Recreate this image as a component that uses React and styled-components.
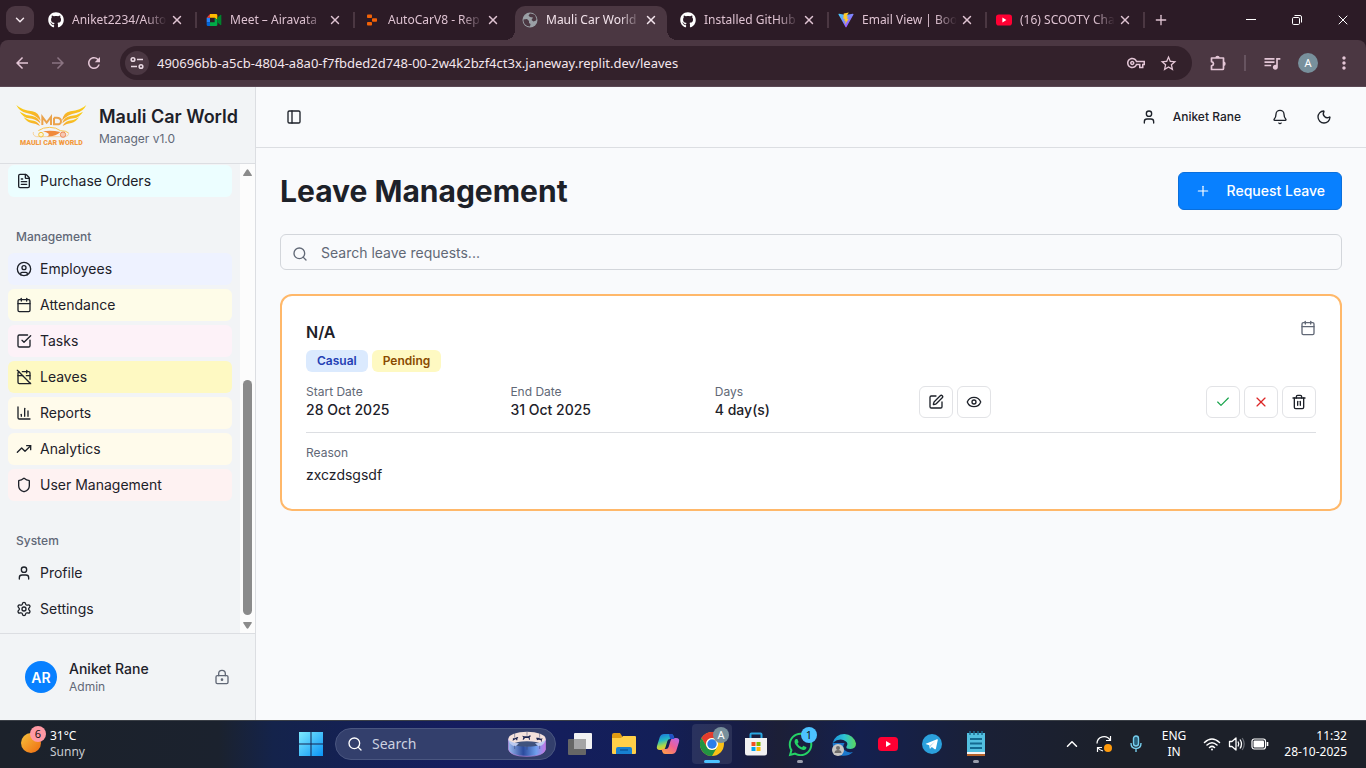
import React from 'react';
import styled, { createGlobalStyle, css } from 'styled-components';
import {
  ChevronDown, ChevronUp, X, Plus, FileText, CircleUser, Calendar,
  SquareCheckBig, CalendarOff, ChartColumn, TrendingUp, Shield, User, Settings, LockKeyhole,
  PanelLeft, Bell, Moon, Search, SquarePen, Eye, Check, Trash2,
} from 'lucide-react';
import { FaGithub, FaWhatsapp } from 'react-icons/fa';
import {
  MdArrowBack, MdArrowForward, MdRefresh, MdOutlineVpnKey, MdStarOutline, MdQueueMusic, MdMoreVert,
} from 'react-icons/md';

const SYSTEM_FONT = '"Noto Sans", "Open Sans", sans-serif';
const APP_FONT = 'Inter, "Liberation Sans", sans-serif';

const GlobalStyle = createGlobalStyle`
  *, *::before, *::after { box-sizing: border-box; }
  body { margin: 0; }
  h1, h2, p { margin: 0; }
  button, input { font: inherit; color: inherit; }
  button { margin: 0; padding: 0; border: 0; background: none; cursor: pointer; }
  input { min-width: 0; padding: 0; border: 0; outline: 0; background: none; }
  a { color: inherit; text-decoration: none; }
  svg { flex: none; display: block; }
`;

const Screen = styled.div`
  display: flex;
  flex-direction: column;
  height: 100vh;
  overflow: hidden;
  font-family: ${APP_FONT};
  color: #1d2129;
`;

/* ---------- browser window ---------- */

const TabStrip = styled.div`
  display: flex;
  align-items: stretch;
  height: 40px;
  flex: none;
  background: #2c1b26;
  color: #dfc3d2;
  font: 12px/16px ${SYSTEM_FONT};
`;

const TabSearch = styled.button`
  display: grid;
  place-items: center;
  width: 28px;
  height: 28px;
  margin: 6px 4px 6px 6px;
  border-radius: 9px;
  background: #4b3742;
  color: #f3e6ed;
`;

const Tab = styled.div`
  position: relative;
  display: flex;
  align-items: center;
  width: 158px;
  padding: 0 11px 0 10px;
  ${(p) => p.$active && css`
    color: #f3e4ec;
    &::before {
      content: '';
      position: absolute;
      inset: 6px 3px 0;
      border-radius: 10px 10px 0 0;
      background: #4b3742;
    }
    &::after {
      content: '';
      position: absolute;
      inset: auto -7px 0;
      height: 10px;
      background:
        radial-gradient(circle at 0 0, transparent 10px, #4b3742 10px) left / 10px 10px no-repeat,
        radial-gradient(circle at 100% 0, transparent 10px, #4b3742 10px) right / 10px 10px no-repeat;
    }
    > * { position: relative; }
  `}
  ${(p) => p.$divider && css`
    &::after {
      content: '';
      position: absolute;
      right: -1px;
      top: 12px;
      width: 2px;
      height: 16px;
      background: #4b3742;
    }
  `}
`;

const TabTitle = styled.span`
  flex: 1;
  min-width: 0;
  padding-left: 8px;
  white-space: nowrap;
  mask-image: linear-gradient(90deg, #000 78%, transparent 98%);
`;

const IconButton = styled.button`
  display: grid;
  place-items: center;
  flex: none;
  width: ${(p) => p.$w || 16}px;
  height: ${(p) => p.$h || 16}px;
`;

const NewTab = styled(IconButton)`
  align-self: center;
  margin-left: 3px;
`;

const WindowControls = styled.div`
  display: flex;
  margin-left: auto;
  color: #fff;
`;

const ToolbarWrap = styled.div`
  flex: none;
  background: #2c1b26;
`;

const Toolbar = styled.div`
  display: flex;
  align-items: center;
  height: 47px;
  padding: 0 4px;
  border-bottom: 1px solid #5b4854;
  border-radius: 8px 8px 0 0;
  background: #4b3742;
  color: #e4c6d6;
`;

const AddressBar = styled.div`
  display: flex;
  align-items: center;
  flex: 1;
  height: 34px;
  margin: 0 8px;
  padding: 0 8px 0 5px;
  border-radius: 17px;
  background: #33212b;
`;

const SiteInfo = styled(IconButton)`
  border-radius: 50%;
  background: #4b3742;
  margin-right: 8px;
`;

const AddressInput = styled.input`
  flex: 1;
  height: 24px;
  font: 13px/24px ${SYSTEM_FONT};
  color: #f3e6ed;
`;

const ToolbarDivider = styled.span`
  width: 2px;
  height: 16px;
  margin: 0 8px;
  background: #675460;
`;

const BrowserAvatar = styled.span`
  display: grid;
  place-items: center;
  width: 20px;
  height: 20px;
  border-radius: 50%;
  background: #78909c;
  color: #fff;
  font: 11px/20px ${SYSTEM_FONT};
`;

/* ---------- web page ---------- */

const Page = styled.div`
  display: flex;
  flex: 1;
  min-height: 0;
  background: #f9fafc;
`;

const Sidebar = styled.aside`
  display: flex;
  flex-direction: column;
  flex: none;
  width: 256px;
  border-right: 1px solid #dcdee2;
  background: #f2f4f6;
`;

const Brand = styled.header`
  display: flex;
  align-items: center;
  gap: 12px;
  flex: none;
  padding: 16px;
  border-bottom: 1px solid #dcdee2;
`;

const BrandName = styled.p`
  font-size: 18px;
  line-height: 28px;
  font-weight: 600;
  white-space: nowrap;
`;

const Muted = styled.p`
  font-size: 12px;
  line-height: 16px;
  color: #616876;
`;

const NavArea = styled.div`
  display: flex;
  flex: 1;
  min-height: 0;
`;

const NavList = styled.nav`
  display: flex;
  flex-direction: column;
  justify-content: flex-end;
  gap: 8px;
  flex: 1;
  overflow: hidden;
`;

const NavGroup = styled.div`
  display: flex;
  flex-direction: column;
  gap: 4px;
  padding: 8px;
`;

const NavLabel = styled.h2`
  height: 28px;
  padding: 0 8px;
  font-size: 12px;
  line-height: 32px;
  font-weight: 500;
  color: #616876;
`;

const NavItem = styled.a`
  display: flex;
  align-items: center;
  gap: 8px;
  height: 32px;
  padding: 0 8px;
  border-radius: 6px;
  background: ${(p) => p.$tint || 'transparent'};
  font-size: 14px;
  line-height: 20px;
`;

const ScrollTrack = styled.div`
  display: flex;
  flex-direction: column;
  align-items: center;
  flex: none;
  width: 15px;
  padding: 5px 0 4px;
  background: #fcfcfc;
`;

const ScrollThumb = styled.div`
  width: 9px;
  height: 51%;
  margin: auto 0 7px;
  border-radius: 5px;
  background: #8b8b8b;
`;

const SidebarFooter = styled.footer`
  flex: none;
  padding: 16px;
  border-top: 1px solid #dcdee2;
`;

const AccountButton = styled.button`
  display: flex;
  align-items: center;
  gap: 12px;
  width: 100%;
  padding: 9px;
  text-align: left;
  color: #616876;
`;

const AccountText = styled.span`
  display: flex;
  flex-direction: column;
  flex: 1;
`;

const AccountName = styled.span`
  font-size: 14px;
  line-height: 20px;
  font-weight: 500;
  color: #1d2129;
`;

const Avatar = styled.span`
  display: grid;
  place-items: center;
  width: 32px;
  height: 32px;
  border-radius: 50%;
  background: #0880ff;
  color: #fff;
  font-size: 14px;
  font-weight: 600;
`;

const Main = styled.div`
  display: flex;
  flex-direction: column;
  flex: 1;
  min-width: 0;
`;

const TopBar = styled.header`
  display: flex;
  align-items: center;
  gap: 8px;
  height: 61px;
  padding: 0 24px;
  border-bottom: 1px solid #dcdee2;
`;

const UserButton = styled.button`
  display: flex;
  align-items: center;
  gap: 16px;
  height: 32px;
  margin-left: auto;
  padding: 0 13px;
  font-size: 12px;
  line-height: 16px;
  font-weight: 500;
`;

const Content = styled.main`
  display: flex;
  flex-direction: column;
  gap: 24px;
  padding: 24px;
`;

const TitleRow = styled.div`
  display: flex;
  align-items: center;
  justify-content: space-between;
`;

const Title = styled.h1`
  font-size: 30px;
  line-height: 36px;
  font-weight: 700;
`;

const PrimaryButton = styled.button`
  display: flex;
  align-items: center;
  gap: 16px;
  height: 38px;
  padding: 0 16px;
  border: 1px solid #0a6fdc;
  border-radius: 6px;
  background: #0880ff;
  color: #fff;
  font-size: 14px;
  line-height: 20px;
  font-weight: 500;
`;

const SearchBox = styled.label`
  display: flex;
  align-items: center;
  gap: 12px;
  height: 36px;
  padding: 0 11px;
  border: 1px solid #d3d6db;
  border-radius: 6px;
  color: #616876;
  svg { margin-top: 4px; }
  input { flex: 1; height: 20px; margin-top: 2px; padding-left: 1px; font-size: 14px; line-height: 20px; }
  input::placeholder { color: #616876; opacity: 1; }
`;

const Card = styled.article`
  padding: 24px;
  border: 2px solid #ffb86a;
  border-radius: 12px;
  background: #fff;
`;

const CardHeader = styled.div`
  display: flex;
  justify-content: space-between;
  margin-bottom: 12px;
  > svg { color: #616876; }
`;

const CardTitle = styled.h2`
  margin-bottom: 6px;
  font-size: 16px;
  line-height: 24px;
  font-weight: 600;
`;

const Badges = styled.div`
  display: flex;
  gap: 4px;
`;

const Badge = styled.span`
  padding: 3px 11px;
  border-radius: 6px;
  background: ${(p) => p.$bg};
  color: ${(p) => p.$fg};
  font-size: 12px;
  line-height: 16px;
  font-weight: 600;
`;

const Facts = styled.div`
  display: grid;
  grid-template-columns: repeat(5, minmax(0, 1fr));
  align-items: center;
  gap: 12px;
  padding-bottom: 12px;
  border-bottom: 1px solid #dcdee2;
`;

const FactValue = styled.p`
  font-size: 14px;
  line-height: 20px;
  font-weight: 500;
`;

const Actions = styled.div`
  display: flex;
  gap: 4px;
  justify-content: ${(p) => (p.$end ? 'flex-end' : 'flex-start')};
`;

const ActionButton = styled.button`
  display: grid;
  place-items: center;
  width: 34px;
  height: 32px;
  border: 1px solid #e2e3e6;
  border-radius: 6px;
  background: #fff;
  color: ${(p) => p.$color || '#1d2129'};
`;

const Reason = styled.div`
  display: flex;
  flex-direction: column;
  gap: 4px;
  padding-top: 12px;
`;

const ReasonText = styled.p`
  font-size: 14px;
  line-height: 20px;
`;

/* ---------- desktop taskbar ---------- */

const Taskbar = styled.footer`
  display: flex;
  align-items: center;
  flex: none;
  height: 48px;
  box-shadow: inset 0 1px #3b4047;
  background: linear-gradient(90deg, #1c222b 0, #1b222e 16%, #14234b 20%, #151d60 34%, #131f58 48%, #171d45 54%, #1c1f37 57%, #14204f 63%, #1a2036 72%, #1c2029 82%);
  color: #fff;
  font: 12px/16px ${SYSTEM_FONT};
`;

const Weather = styled.button`
  display: flex;
  align-items: center;
  gap: 3px;
  flex: none;
  width: 291px;
  padding-left: 19px;
  text-align: left;
`;

const WeatherText = styled.span`
  span { display: block; color: #c9ccd1; }
`;

const Apps = styled.div`
  display: flex;
  align-items: center;
  gap: 4px;
`;

const AppButton = styled.button`
  position: relative;
  display: grid;
  place-items: center;
  width: 40px;
  height: 40px;
  border-radius: 4px;
  background: ${(p) => (p.$active ? 'rgba(255,255,255,0.09)' : 'none')};
  &::after {
    content: '';
    display: ${(p) => (p.$running || p.$active ? 'block' : 'none')};
    position: absolute;
    bottom: 1px;
    left: calc(50% - ${(p) => (p.$active ? 8 : 3)}px);
    width: ${(p) => (p.$active ? 16 : 6)}px;
    height: 3px;
    border-radius: 2px;
    background: ${(p) => (p.$active ? '#4cc2ff' : '#9a9eac')};
  }
`;

const AppBadge = styled.span`
  position: absolute;
  top: 3px;
  right: 3px;
  display: grid;
  place-items: center;
  width: 16px;
  height: 16px;
  border-radius: 50%;
  background: ${(p) => p.$bg};
  color: ${(p) => p.$fg};
  font: 11px/16px ${SYSTEM_FONT};
`;

const TaskSearch = styled.label`
  display: flex;
  align-items: center;
  gap: 9px;
  width: 221px;
  height: 32px;
  padding: 0 9px 0 11px;
  border: 1px solid #4a5680;
  border-radius: 16px;
  background: #333f6c;
  font-size: 14px;
  input { flex: 1; }
  input::placeholder { color: #cdd1e0; opacity: 1; }
`;

const Tray = styled.div`
  display: flex;
  align-items: center;
  margin-left: auto;
  padding-right: 19px;
`;

const TrayText = styled.button`
  width: ${(p) => p.$w}px;
  text-align: ${(p) => p.$align || 'center'};
  span { display: block; }
`;

/* ---------- drawings ---------- */

const MeetIcon = () => (
  <svg width="16" height="16" viewBox="0 0 48 48">
    <path fill="#2684fc" d="M2 17h10v14H2z" />
    <path fill="#0066da" d="M2 31h10v11H6a4 4 0 0 1-4-4z" />
    <path fill="#ea4335" d="M12 6 2 17h10z" />
    <path fill="#ffba00" d="M12 6h18a4 4 0 0 1 4 4v14l-8-7H12z" />
    <path fill="#00ac47" d="M12 31h14V17l8 7v14a4 4 0 0 1-4 4H12z" />
    <path fill="#00832d" d="m34 17 9-8c1.600-1 3 0 3 1.500v27c0 1.500-1.400 2.500-3 1.500l-9-8z" />
  </svg>
);

const ReplitIcon = () => (
  <svg width="16" height="16" viewBox="0 0 16 16" fill="#f26207">
    <rect x="3" y="2.500" width="5" height="3.600" rx=".8" />
    <rect x="8" y="6.200" width="5" height="3.600" rx=".8" />
    <rect x="3" y="9.900" width="5" height="3.600" rx=".8" />
  </svg>
);

const GlobeIcon = () => (
  <svg width="16" height="16" viewBox="0 0 16 16">
    <circle cx="8" cy="8" r="7.500" fill="#9aa0a6" />
    <path fill="#4b3742" d="M1.500 7.500 5 7l2 2v2l1.500 1L8 14.500C4 14.500 1.200 11.500 1.500 7.500ZM8 1.500 6.500 3.500 8 5l3 .5L9.500 8l2 1.500 2.500-1 .5-1.500-1.500-4Q11 1.600 8 1.500Z" />
  </svg>
);

const ViteIcon = () => (
  <svg width="16" height="16" viewBox="0 0 32 32">
    <defs>
      <linearGradient id="viteBody" x1="0" y1="0" x2="1" y2="1">
        <stop stopColor="#41d1ff" />
        <stop offset="1" stopColor="#bd34fe" />
      </linearGradient>
    </defs>
    <path fill="url(#viteBody)" d="M31 5 17 30q-1 1.500-2 0L1 5q-.5-1.800 1.200-1.500L16 6l13.500-2.500Q31.500 3.500 31 5Z" />
    <path fill="#ffca28" d="m21.500 1-10 2-.8 11 3-.6-1 5 2.600-.8-1.300 7.400 7.500-11.500-3.500.6 1.700-5.500-3.200.6Z" />
  </svg>
);

const YouTubeIcon = ({ size }) => (
  <svg width={size} height={size} viewBox="0 0 20 20">
    <rect y="3" width="20" height="14" rx="3.500" fill="#ff0033" />
    <path d="m8 7 5 3-5 3z" fill="#fff" />
  </svg>
);

const SiteInfoIcon = () => (
  <svg width="16" height="16" viewBox="0 0 16 16" fill="none" stroke="#e9d8e2" strokeWidth="1.600">
    <circle cx="4" cy="4.500" r="1.800" />
    <path d="M8 4.500h6M2 11.500h6" />
    <circle cx="12" cy="11.500" r="1.800" />
  </svg>
);

const ExtensionsIcon = () => (
  <svg width="18" height="18" viewBox="0 0 18 18">
    <path
      d="M2.500 4h12v10.500q0 1-1 1h-11v-3.600q2-.4 2-2.100t-2-2.100Z"
      fill="none" stroke="currentColor" strokeWidth="1.700" strokeLinejoin="round"
    />
    <path d="M6.300 4a2.200 2.200 0 0 1 4.400 0zM14.500 7.500a2.200 2.200 0 0 1 0 4.400z" fill="currentColor" />
  </svg>
);

const MinimizeIcon = () => (
  <svg width="12" height="12" viewBox="0 0 12 12" stroke="#fff"><path d="M1 5.500h10" /></svg>
);

const RestoreIcon = () => (
  <svg width="12" height="12" viewBox="0 0 12 12" fill="none" stroke="#fff">
    <rect x="1.500" y="3.500" width="7" height="7" rx="1.200" />
    <path d="M3.500 1.500H9A1.500 1.500 0 0 1 10.500 3v5.500" />
  </svg>
);

const Wing = (props) => (
  <g {...props}>
    <path d="M50 57q17 16 48 19 20 3 25 28-18-19-42-23-22-4-31-24Z" />
    <path d="M60 77q17 11 38 13 20 4 24 22-15-13-34-15-18-3-28-20Z" />
    <path d="M72 94q14 9 30 10 14 4 19 16-12-8-26-9-14-3-23-17Z" />
  </g>
);

const BrandLogo = () => (
  <svg width="71" height="42" viewBox="49 54 213 126" role="img" aria-label="Mauli Car World logo">
    <defs>
      <linearGradient id="wing" x1="0" y1="0" x2="0" y2="1">
        <stop stopColor="#fbd50f" />
        <stop offset="1" stopColor="#f4a03a" />
      </linearGradient>
    </defs>
    <Wing fill="url(#wing)" />
    <Wing fill="url(#wing)" transform="translate(310 0) scale(-1 1)" />
    <g fill="none" stroke="#eba34c" strokeWidth="6">
      <path d="M128 117V93l13 17 13-17v24M163 95h8q13 0 13 10.500T171 115h-8V95" />
    </g>
    <path d="M116 134q14-10 34-10 20 0 32 10 18 0 25 7" fill="none" stroke="#fac54c" strokeWidth="3" />
    <path d="M130 136q24-5 52 2-10 12-40 15 16-10-12-17Z" fill="#f08a3c" />
    <path d="M101 138q-2 12 10 14h86q10-2 10-10" fill="none" stroke="#f6c177" strokeWidth="2" />
    <circle cx="124" cy="146" r="7" fill="#fff4cf" stroke="#f3c33c" strokeWidth="3" />
    <circle cx="190" cy="146" r="8" fill="#f6c9b4" stroke="#ec8a5c" strokeWidth="3" />
    <text x="155" y="178" textAnchor="middle" fill="#f39a3e" fontFamily="Roboto, sans-serif" fontWeight="900" fontSize="21">MAULI CAR WORLD</text>
  </svg>
);

const ScrollArrow = ({ down }) => (
  <svg width="9" height="7" viewBox="0 0 9 7" fill="#8b8b8b">
    <path d={down ? 'M1 0h7q1.500 0 .6 1.300L5.500 6q-1 1.400-2 0L.4 1.300Q-.5 0 1 0Z' : 'M1 7h7q1.500 0 .6-1.300L5.500 1q-1-1.400-2 0L.4 5.700Q-.5 7 1 7Z'} />
  </svg>
);

const WeatherIcon = () => (
  <svg width="28" height="36" viewBox="0 0 28 36">
    <defs>
      <linearGradient id="sun" x1="0" y1="0" x2="1" y2="1">
        <stop stopColor="#f7c33c" />
        <stop offset="1" stopColor="#ee6a10" />
      </linearGradient>
    </defs>
    <circle cx="12" cy="17" r="10" fill="url(#sun)" />
    <circle cx="19" cy="8" r="8" fill="#ff99a4" />
    <text x="19" y="12" textAnchor="middle" fontFamily="Noto Sans, sans-serif" fontSize="11" fill="#111">6</text>
  </svg>
);

const WindowsIcon = () => (
  <svg width="24" height="24" viewBox="0 0 24 24">
    <defs>
      <linearGradient id="win" gradientUnits="userSpaceOnUse" x1="0" y1="0" x2="24" y2="24">
        <stop stopColor="#7eeaff" />
        <stop offset="1" stopColor="#0a93f5" />
      </linearGradient>
    </defs>
    <path fill="url(#win)" d="M0 0h11.500v11.500H0zM12.500 0H24v11.500H12.500zM0 12.500h11.500V24H0zM12.500 12.500H24V24H12.500z" />
  </svg>
);

const CarouselIcon = () => (
  <svg width="38" height="26" viewBox="0 0 114 78">
    <defs>
      <linearGradient id="drum">
        <stop stopColor="#9dbbf0" />
        <stop offset=".4" stopColor="#2b4b9e" />
        <stop offset=".75" stopColor="#6fa0ee" />
        <stop offset="1" stopColor="#c477e6" />
      </linearGradient>
    </defs>
    <path d="M1 24v30q4 22 56 22t56-22V24z" fill="url(#drum)" stroke="#bb83dd" strokeWidth="2" />
    <ellipse cx="57" cy="24" rx="56" ry="22" fill="#f3e1dc" />
    <ellipse cx="57" cy="39" rx="38" ry="8" fill="#40537e" />
    <path d="M1 26q4 18 22 20l10-9q-22-2-32-11ZM113 26q-4 18-22 20l-10-9q22-2 32-11Z" fill="#bccaf0" />
    <g fill="#1b2350">
      <path d="M42 14l7 2h12l5-3 3 2-4 4 1 7h-3l-1-5H51l-4 5h-3l2-7zM14 22l6 0 8-4 3 1-3 4 0 5h-3l-1-4-6 3-4 3 1-7zM84 20l7 0 8 3 5-1-3 5 1 5-3-1-1-4-7-1-4 2-1-4z" />
    </g>
    <path d="M57 2v12M57 44v12M20 6v14M20 44v10M95 6v14M95 44v10" stroke="#34406c" strokeWidth="1.500" fill="none" />
  </svg>
);

const TaskViewIcon = () => (
  <svg width="24" height="24" viewBox="0 0 24 24">
    <rect x="6" y="1" width="18" height="16" rx="1" fill="#f1f1f3" />
    <rect x="0" y="7" width="18" height="16" rx="1" fill="#666" />
    <path d="M6 7h12v10H6z" fill="#a4a4a6" />
  </svg>
);

const FolderIcon = () => (
  <svg width="24" height="24" viewBox="0 0 24 24">
    <path d="M0 3q0-2 2-2h6l2 3v5H0z" fill="#e09a12" />
    <path d="M0 6h9l2-2h12q1 0 1 1v16q0 1-1 1H1q-1 0-1-1z" fill="#ffcf48" />
    <path d="M4 22v-5q0-2 2-2h12q2 0 2 2v5z" fill="#1780d0" />
    <path d="M8 18h8" stroke="#0b5aa0" strokeWidth="1.500" />
  </svg>
);

const CopilotIcon = () => (
  <svg width="24" height="24" viewBox="0 0 24 24">
    <defs>
      <linearGradient id="copA" x1="0" y1="0" x2=".3" y2="1">
        <stop stopColor="#1c6fe0" /><stop offset=".45" stopColor="#23b9c4" /><stop offset=".75" stopColor="#a8d64a" /><stop offset="1" stopColor="#f5c52c" />
      </linearGradient>
      <linearGradient id="copB" x1="1" y1="0" x2=".2" y2="1">
        <stop stopColor="#b56af0" /><stop offset=".5" stopColor="#ee5f95" /><stop offset="1" stopColor="#ff9a4a" />
      </linearGradient>
    </defs>
    <path d="M8 2h7q2 0 2.700 2.300L18.500 7H14q-2 0-2.600 2l-2 6.500Q8.800 18 6.500 18H4q-4 0-3-4L3.800 5Q5 2 8 2Z" fill="url(#copA)" />
    <path d="M16 22H9q-2 0-2.700-2.300L5.500 17H10q2 0 2.600-2l2-6.500Q15.200 6 17.500 6H20q4 0 3 4l-2.800 9q-1.200 3-4.200 3Z" fill="url(#copB)" />
    <path d="M13 2h2q2 0 2.700 2.300L18.500 7H14z" fill="#2151c4" />
  </svg>
);

const ChromeIcon = () => (
  <svg width="24" height="24" viewBox="0 0 24 24">
    <circle cx="12" cy="12" r="12" fill="#fbc116" />
    <path d="M1.600 6A12 12 0 0 1 22.400 6H12a6 6 0 0 0-5.200 9Z" fill="#e33b2e" />
    <path d="M1.600 6A12 12 0 0 0 12 24l5.200-9A6 6 0 0 1 6.800 15Z" fill="#229342" />
    <circle cx="12" cy="12" r="6" fill="#fff" />
    <circle cx="12" cy="12" r="4.700" fill="#2a7de9" />
  </svg>
);

const StoreIcon = () => (
  <svg width="24" height="24" viewBox="0 0 24 24">
    <path d="M6.500 7V2.500q0-1 1-1h9q1 0 1 1V7" fill="none" stroke="#2aa6e0" strokeWidth="2" />
    <path d="M1 6h22v15q0 2.500-2.500 2.500h-17Q1 23.500 1 21z" fill="#f2f2f3" />
    <path d="M7.500 10h4v4h-4z" fill="#f25022" /><path d="M12.500 10h4v4h-4z" fill="#7fba00" />
    <path d="M7.500 15h4v4h-4z" fill="#00a4ef" /><path d="M12.500 15h4v4h-4z" fill="#ffb900" />
  </svg>
);

const EdgeIcon = () => (
  <svg width="24" height="24" viewBox="0 0 24 24">
    <defs>
      <linearGradient id="edgeTop"><stop stopColor="#1b8fdc" /><stop offset=".5" stopColor="#2cc3d4" /><stop offset="1" stopColor="#5bd85c" /></linearGradient>
    </defs>
    <path d="M.6 11q0 10 8 12.500 7 1.500 12.400-3.500-5 1.500-8.500-2-2.500-3 0-7Z" fill="#1b78cc" />
    <path d="M.6 11A12 12 0 0 1 24 11.500q0 5-5.500 5.500-5 0-4-2.500 2-3-.5-5Q8 5 .6 11Z" fill="url(#edgeTop)" />
    <circle cx="6" cy="18" r="6" fill="#c8c6c4" />
    <circle cx="6" cy="16" r="2" fill="#6f6d6b" /><path d="M2.500 21q0-3 3.500-3t3.500 3" fill="#6f6d6b" />
  </svg>
);

const TelegramIcon = () => (
  <svg width="20" height="20" viewBox="0 0 20 20">
    <circle cx="10" cy="10" r="10" fill="#2ba0dc" />
    <path d="M3.800 9.700 15 5.200q1-.2.800.8l-1.900 8.700q-.3 1-1.200.5l-2.900-2.100-1.400 1.400q-.6.4-.7-.3l-.5-3-2.900-.9q-.9-.3-.5-.6Z" fill="#fff" />
    <path d="m7.700 11.500 5.600-4.200-4.300 4.700-.8 2Z" fill="#b9dcf0" />
  </svg>
);

const NotepadIcon = () => (
  <svg width="20" height="26" viewBox="0 0 20 26">
    <path d="M1 2h18v20H1z" fill="#52bfe0" />
    <path d="M1 21h18v2.500H1z" fill="#f4f4f4" /><path d="M1 23h18v2H1z" fill="#b5622a" />
    <path d="M4 0v4M8 0v4M12 0v4M16 0v4" stroke="#1d6c90" strokeWidth="1.500" />
    <path d="M4 8h12M4 12.500h12M4 17h12" stroke="#146a91" strokeWidth="1.800" />
  </svg>
);

const SyncIcon = () => (
  <svg width="18" height="18" viewBox="0 0 18 18" fill="none" stroke="#fff" strokeWidth="1.200">
    <path d="M2 8.500A7 7 0 0 1 15 5M15.500 1v4.500H11M2.500 17v-4.500H7M3 13q2 2.500 5 3" />
    <circle cx="13" cy="13" r="4" fill="#ff9a0c" stroke="none" />
  </svg>
);

const MicIcon = () => (
  <svg width="16" height="18" viewBox="0 0 16 18" fill="none" stroke="#76cdec" strokeWidth="1.400">
    <rect x="5.500" y="1" width="5" height="10" rx="2.500" fill="#29607a" />
    <path d="M3 8q0 5.500 5 5.500T13 8M8 13.500V17" />
  </svg>
);

const WifiIcon = () => (
  <svg width="18" height="16" viewBox="0 0 18 16" fill="none" stroke="#fff" strokeWidth="1.500" strokeLinecap="round">
    <path d="M1.500 6.500q7.500-7 15 0M4 9q5-4.600 10 0M6.500 11.500q2.500-2.200 5 0" />
    <circle cx="9" cy="13.500" r="1" fill="#fff" stroke="none" />
  </svg>
);

const SoundIcon = () => (
  <svg width="18" height="16" viewBox="0 0 18 16" fill="none" stroke="#fff" strokeWidth="1.300">
    <path d="M1.500 5.500H4L8 2v12L4 10.500H1.500z" strokeLinejoin="round" />
    <path d="M10 5.500q1.500 2.500 0 5M12 3.500q3 4.500 0 9" />
    <path d="M14.200 2q4 6 0 12" stroke="#676b73" />
  </svg>
);

const BatteryIcon = () => (
  <svg width="18" height="12" viewBox="0 0 18 12" fill="none" stroke="#fff" strokeWidth="1.200">
    <rect x="1" y="1" width="13.500" height="10" rx="2.200" />
    <rect x="2.500" y="2.500" width="10.500" height="7" rx="1" fill="#fff" stroke="none" />
    <path d="M16.500 4v4" strokeWidth="1.600" />
  </svg>
);

/* ---------- data ---------- */

const tabs = [
  { title: 'Aniket2234/Auto', icon: <FaGithub size={16} color="#fff" />, divider: true },
  { title: 'Meet – Airavata', icon: <MeetIcon />, divider: true },
  { title: 'AutoCarV8 - Rep', icon: <ReplitIcon /> },
  { title: 'Mauli Car World', icon: <GlobeIcon />, active: true },
  { title: 'Installed GitHub', icon: <FaGithub size={16} color="#fff" />, divider: true },
  { title: 'Email View | Boo', icon: <ViteIcon />, divider: true },
  { title: '(16) SCOOTY Cha', icon: <YouTubeIcon size={16} />, divider: true },
];

const management = [
  { label: 'Employees', icon: CircleUser, tint: '#eef2ff' },
  { label: 'Attendance', icon: Calendar, tint: '#fefce8' },
  { label: 'Tasks', icon: SquareCheckBig, tint: '#fdf2f8' },
  { label: 'Leaves', icon: CalendarOff, tint: '#fef9c2', current: true },
  { label: 'Reports', icon: ChartColumn, tint: '#fffbeb' },
  { label: 'Analytics', icon: TrendingUp, tint: '#fffbeb' },
  { label: 'User Management', icon: Shield, tint: '#fef2f2' },
];

const system = [
  { label: 'Profile', icon: User },
  { label: 'Settings', icon: Settings },
];

const facts = [
  ['Start Date', '28 Oct 2025'],
  ['End Date', '31 Oct 2025'],
  ['Days', '4 day(s)'],
];

const NavItems = ({ items }) => items.map(({ label, icon: Icon, tint, current }) => (
  <NavItem key={label} href="#" $tint={tint} aria-current={current ? 'page' : undefined}>
    <Icon size={16} />
    {label}
  </NavItem>
));

export default function App() {
  return (
    <Screen>
      <GlobalStyle />
      <TabStrip>
        <TabSearch aria-label="Search tabs"><ChevronDown size={14} strokeWidth={2.5} /></TabSearch>
        {tabs.map((t) => (
          <Tab key={t.title} $active={t.active} $divider={t.divider}>
            {t.icon}
            <TabTitle>{t.title}</TabTitle>
            <IconButton aria-label="Close tab"><X size={14} strokeWidth={2.5} /></IconButton>
          </Tab>
        ))}
        <NewTab aria-label="New tab" $w={28} $h={28}><Plus size={16} /></NewTab>
        <WindowControls>
          <IconButton aria-label="Minimize" $w={46} $h={40}><MinimizeIcon /></IconButton>
          <IconButton aria-label="Restore" $w={46} $h={40}><RestoreIcon /></IconButton>
          <IconButton aria-label="Close window" $w={46} $h={40}><X size={16} strokeWidth={1.5} /></IconButton>
        </WindowControls>
      </TabStrip>

      <ToolbarWrap>
        <Toolbar>
          <IconButton aria-label="Back" $w={36} $h={36}><MdArrowBack size={18} /></IconButton>
          <IconButton aria-label="Forward" $w={36} $h={36}><MdArrowForward size={18} color="#8b7482" /></IconButton>
          <IconButton aria-label="Reload" $w={36} $h={36}><MdRefresh size={18} /></IconButton>
          <AddressBar>
            <SiteInfo aria-label="Site information" $w={24} $h={24}><SiteInfoIcon /></SiteInfo>
            <AddressInput
              aria-label="Address"
              defaultValue="490696bb-a5cb-4804-a8a0-f7fbded2d748-00-2w4k2bzf4ct3x.janeway.replit.dev/leaves"
            />
            <IconButton aria-label="Passwords" $w={32} $h={32}><MdOutlineVpnKey size={18} /></IconButton>
            <IconButton aria-label="Bookmark" $w={32} $h={32}><MdStarOutline size={19} /></IconButton>
          </AddressBar>
          <IconButton aria-label="Extensions" $w={36} $h={36}><ExtensionsIcon /></IconButton>
          <ToolbarDivider />
          <IconButton aria-label="Media" $w={36} $h={36}><MdQueueMusic size={20} /></IconButton>
          <IconButton aria-label="Account" $w={36} $h={36}><BrowserAvatar>A</BrowserAvatar></IconButton>
          <IconButton aria-label="Menu" $w={36} $h={36}><MdMoreVert size={20} /></IconButton>
        </Toolbar>
      </ToolbarWrap>

      <Page>
        <Sidebar>
          <Brand>
            <BrandLogo />
            <div>
              <BrandName>Mauli Car World</BrandName>
              <Muted>Manager v1.0</Muted>
            </div>
          </Brand>
          <NavArea>
            <NavList aria-label="Main">
              <NavGroup>
                <NavItems items={[{ label: 'Purchase Orders', icon: FileText, tint: '#ecfeff' }]} />
              </NavGroup>
              <NavGroup>
                <NavLabel>Management</NavLabel>
                <NavItems items={management} />
              </NavGroup>
              <NavGroup>
                <NavLabel>System</NavLabel>
                <NavItems items={system} />
              </NavGroup>
            </NavList>
            <ScrollTrack aria-hidden="true">
              <ScrollArrow />
              <ScrollThumb />
              <ScrollArrow down />
            </ScrollTrack>
          </NavArea>
          <SidebarFooter>
            <AccountButton>
              <Avatar>AR</Avatar>
              <AccountText>
                <AccountName>Aniket Rane</AccountName>
                <Muted as="span">Admin</Muted>
              </AccountText>
              <LockKeyhole size={16} />
            </AccountButton>
          </SidebarFooter>
        </Sidebar>

        <Main>
          <TopBar>
            <IconButton aria-label="Toggle sidebar" $w={28} $h={28}><PanelLeft size={16} /></IconButton>
            <UserButton><User size={16} />Aniket Rane</UserButton>
            <IconButton aria-label="Notifications" $w={36} $h={36}><Bell size={16} /></IconButton>
            <IconButton aria-label="Dark mode" $w={36} $h={36}><Moon size={16} /></IconButton>
          </TopBar>
          <Content>
            <TitleRow>
              <Title>Leave Management</Title>
              <PrimaryButton><Plus size={16} strokeWidth={1.75} />Request Leave</PrimaryButton>
            </TitleRow>
            <SearchBox>
              <Search size={16} />
              <input type="text" aria-label="Search leave requests" placeholder="Search leave requests..." />
            </SearchBox>
            <Card>
              <CardHeader>
                <div>
                  <CardTitle>N/A</CardTitle>
                  <Badges>
                    <Badge $bg="#dbeafe" $fg="#2440b4">Casual</Badge>
                    <Badge $bg="#fef9c2" $fg="#894b00">Pending</Badge>
                  </Badges>
                </div>
                <Calendar size={16} />
              </CardHeader>
              <Facts>
                {facts.map(([label, value]) => (
                  <div key={label}>
                    <Muted>{label}</Muted>
                    <FactValue>{value}</FactValue>
                  </div>
                ))}
                <Actions>
                  <ActionButton aria-label="Edit"><SquarePen size={16} /></ActionButton>
                  <ActionButton aria-label="View"><Eye size={16} /></ActionButton>
                </Actions>
                <Actions $end>
                  <ActionButton aria-label="Approve" $color="#16a34a"><Check size={16} strokeWidth={1.75} /></ActionButton>
                  <ActionButton aria-label="Reject" $color="#dc2626"><X size={16} strokeWidth={1.75} /></ActionButton>
                  <ActionButton aria-label="Delete"><Trash2 size={16} /></ActionButton>
                </Actions>
              </Facts>
              <Reason>
                <Muted>Reason</Muted>
                <ReasonText>zxczdsgsdf</ReasonText>
              </Reason>
            </Card>
          </Content>
        </Main>
      </Page>

      <Taskbar>
        <Weather>
          <WeatherIcon />
          <WeatherText>31°C<span>Sunny</span></WeatherText>
        </Weather>
        <Apps>
          <AppButton aria-label="Start"><WindowsIcon /></AppButton>
          <TaskSearch>
            <Search size={16} />
            <input type="text" aria-label="Search" placeholder="Search" />
            <CarouselIcon />
          </TaskSearch>
          <AppButton aria-label="Task view"><TaskViewIcon /></AppButton>
          <AppButton aria-label="File Explorer"><FolderIcon /></AppButton>
          <AppButton aria-label="Copilot"><CopilotIcon /></AppButton>
          <AppButton aria-label="Chrome" $active><ChromeIcon /><AppBadge $bg="#78909c" $fg="#fff">A</AppBadge></AppButton>
          <AppButton aria-label="Store"><StoreIcon /></AppButton>
          <AppButton aria-label="WhatsApp" $running><FaWhatsapp size={27} color="#25d366" /><AppBadge $bg="#4cc2ff" $fg="#111">1</AppBadge></AppButton>
          <AppButton aria-label="Edge"><EdgeIcon /></AppButton>
          <AppButton aria-label="YouTube"><YouTubeIcon size={20} /></AppButton>
          <AppButton aria-label="Telegram"><TelegramIcon /></AppButton>
          <AppButton aria-label="Notepad" $running><NotepadIcon /></AppButton>
        </Apps>
        <Tray>
          <IconButton aria-label="Hidden icons" $w={32} $h={40}><ChevronUp size={18} /></IconButton>
          <IconButton aria-label="Updates" $w={32} $h={40}><SyncIcon /></IconButton>
          <IconButton aria-label="Microphone" $w={32} $h={40}><MicIcon /></IconButton>
          <TrayText $w={44}>ENG<span>IN</span></TrayText>
          <IconButton aria-label="Network" $w={32} $h={40}><WifiIcon /></IconButton>
          <IconButton aria-label="Volume" $w={16} $h={40}><SoundIcon /></IconButton>
          <IconButton aria-label="Battery" $w={32} $h={40}><BatteryIcon /></IconButton>
          <TrayText $w={71} $align="right">11:32<span>28-10-2025</span></TrayText>
        </Tray>
      </Taskbar>
    </Screen>
  );
}
